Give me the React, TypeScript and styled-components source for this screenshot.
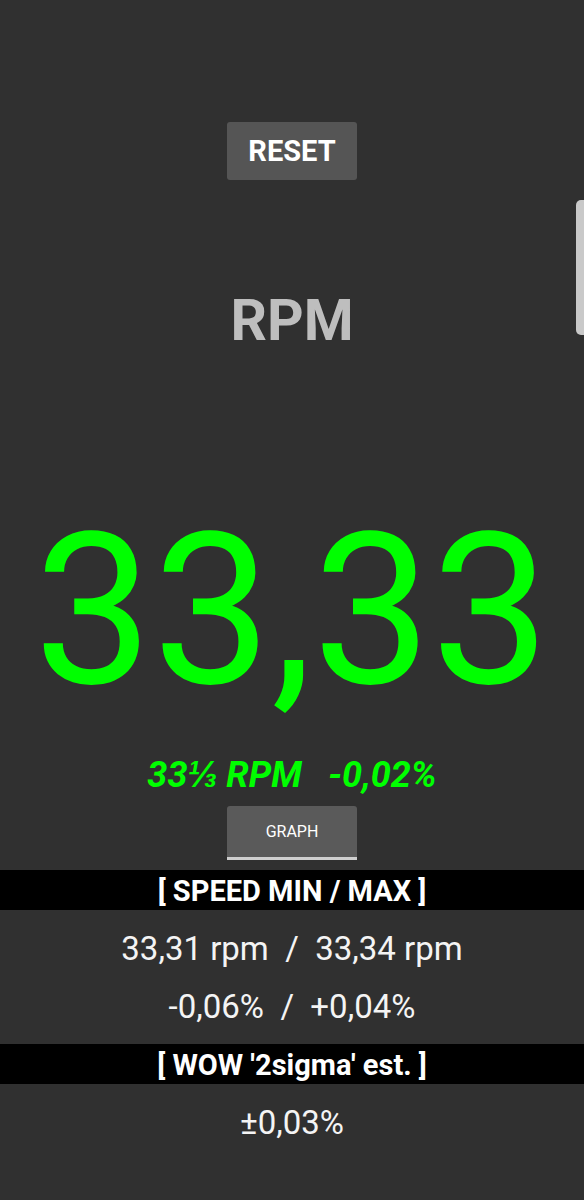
import React from 'react';
import styled, {createGlobalStyle} from 'styled-components';

const GlobalStyle = createGlobalStyle`
	html, body {
		margin     : 0;
		padding    : 0;
		background : #303030;
	}
	body {
		font-family : Roboto, "Liberation Sans", sans-serif;
		color       : #ffffff;
	}
`;

const Screen = styled.div`
	position       : relative;
	display        : flex;
	flex-direction : column;
	align-items    : center;
	width          : 584px;
	height         : 1200px;
	overflow       : hidden;
	background     : #303030;
`;

// android-ish overlay scroll thumb on the right edge
const ScrollThumb = styled.div`
	position      : absolute;
	top           : 200px;
	right         : 0;
	width         : 8px;
	height        : 135px;
	background    : #c9c9c9;
	border-radius : 5px 0 0 5px;
`;

const ResetButton = styled.button`
	margin-top    : 122px;
	width         : 130px;
	height        : 58px;
	border        : 0;
	border-radius : 3px;
	background    : #555555;
	color         : #ffffff;
	font-family   : Roboto, "Liberation Sans", sans-serif;
	font-weight   : 700;
	font-size     : 29px;
	padding       : 0;
`;

const UnitTitle = styled.div`
	margin-top  : 112px;
	font-size   : 57px;
	font-weight : 700;
	line-height : 1;
	color       : #bebebe;
`;

const SpeedValue = styled.div`
	margin-top  : 157px;
	font-size   : 211px;
	line-height : 1;
	color       : #00ff00;
`;

const TargetLine = styled.div`
	margin-top  : 40px;
	font-size   : 36px;
	font-weight : 700;
	font-style  : italic;
	line-height : 1;
	white-space : pre;
	color       : #00ff00;
`;

const GraphTab = styled.button`
	margin-top    : 13px;
	width         : 130px;
	height        : 54px;
	padding       : 0;
	border        : 0;
	border-bottom : 3px solid #cfcfcf;
	border-radius : 3px 3px 0 0;
	background    : #5a5a5a;
	color         : #ffffff;
	font-family   : Roboto, "Liberation Sans", sans-serif;
	font-size     : 16px;
`;

const Section = styled.section<{ first?: boolean }>`
	display        : flex;
	flex-direction : column;
	align-self     : stretch;
	margin-top     : ${({first}) => first ? '10px' : '0'};
`;

const SectionHeader = styled.div`
	height          : 40px;
	padding-top     : 2px;
	box-sizing      : border-box;
	display         : flex;
	align-items     : center;
	justify-content : center;
	background      : #000000;
	font-size       : 29px;
	font-weight     : 700;
	white-space     : pre;
`;

const SectionBody = styled.div`
	display        : flex;
	flex-direction : column;
	align-items    : center;
	padding        : 10px 0 8px;
`;

const Row = styled.div`
	height      : 58px;
	line-height : 58px;
	font-size   : 33px;
	white-space : pre;
	color       : #f4f4f4;
`;

export default function App() {
	return <>
		<GlobalStyle/>
		<Screen>
			<ScrollThumb/>
			<ResetButton>RESET</ResetButton>
			<UnitTitle>RPM</UnitTitle>
			<SpeedValue>33,33</SpeedValue>
			<TargetLine>{'33⅓ RPM   -0,02%'}</TargetLine>
			<GraphTab>GRAPH</GraphTab>
			<Section first>
				<SectionHeader>{'[ SPEED MIN / MAX ]'}</SectionHeader>
				<SectionBody>
					<Row>{'33,31 rpm  /  33,34 rpm'}</Row>
					<Row>{'-0,06%  /  +0,04%'}</Row>
				</SectionBody>
			</Section>
			<Section>
				<SectionHeader>{"[ WOW '2sigma' est. ]"}</SectionHeader>
				<SectionBody>
					<Row>±0,03%</Row>
				</SectionBody>
			</Section>
		</Screen>
	</>;
}
